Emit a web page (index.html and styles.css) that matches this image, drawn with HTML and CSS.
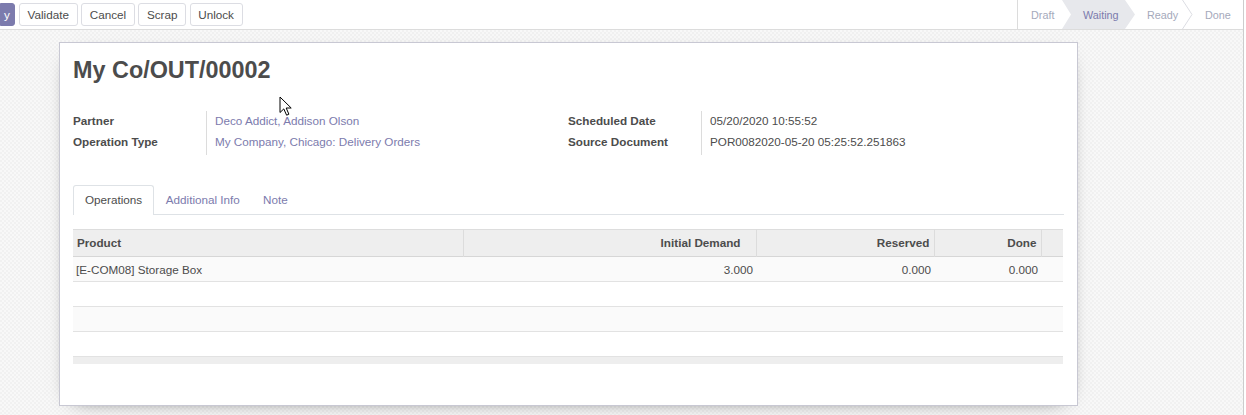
FILE: index.html
```html
<!DOCTYPE html>
<html lang="en">
<head>
<meta charset="utf-8">
<title>My Co/OUT/00002</title>
<link rel="stylesheet" href="styles.css">
</head>
<body>
<div class="app">
  <div class="control">
    <div class="buttons">
      <button class="btn btn-primary">y</button>
      <button class="btn">Validate</button>
      <button class="btn">Cancel</button>
      <button class="btn">Scrap</button>
      <button class="btn">Unlock</button>
    </div>
    <div class="statusbar">
      <span class="st st-draft">Draft</span>
      <span class="st st-waiting">Waiting</span>
      <span class="st st-ready">Ready<svg class="chev" width="11" height="29" viewBox="0 0 11 29"><polyline points="0.5,0 10,14.5 0.5,29" fill="none" stroke="#dcdde3" stroke-width="1"/></svg></span>
      <span class="st st-done">Done</span>
    </div>
  </div>
  <div class="content">
    <div class="sheet">
      <h1 class="title">My Co/OUT/00002</h1>
      <div class="groups">
        <div class="group group-left">
          <div class="lbl">Partner</div>
          <div class="val"><a class="link">Deco Addict, Addison Olson</a></div>
          <div class="lbl">Operation Type</div>
          <div class="val"><a class="link">My Company, Chicago: Delivery Orders</a></div>
        </div>
        <div class="group group-right">
          <div class="lbl">Scheduled Date</div>
          <div class="val">05/20/2020 10:55:52</div>
          <div class="lbl">Source Document</div>
          <div class="val">POR0082020-05-20 05:25:52.251863</div>
        </div>
      </div>
      <div class="tabs">
        <span class="tab active">Operations</span>
        <span class="tab">Additional Info</span>
        <span class="tab">Note</span>
      </div>
      <table class="lines">
        <colgroup>
          <col class="c1"><col class="c2"><col class="c3"><col class="c4"><col class="c5">
        </colgroup>
        <thead>
          <tr>
            <th class="left">Product</th>
            <th class="num demand">Initial Demand</th>
            <th class="num">Reserved</th>
            <th class="num">Done</th>
            <th></th>
          </tr>
        </thead>
        <tbody>
          <tr class="odd">
            <td class="left">[E-COM08] Storage Box</td>
            <td class="num">3.000</td>
            <td class="num">0.000</td>
            <td class="num">0.000</td>
            <td></td>
          </tr>
          <tr><td></td><td></td><td></td><td></td><td></td></tr>
          <tr class="odd"><td></td><td></td><td></td><td></td><td></td></tr>
          <tr><td></td><td></td><td></td><td></td><td></td></tr>
        </tbody>
        <tfoot>
          <tr><td colspan="5"></td></tr>
        </tfoot>
      </table>
    </div>
  </div>
  <svg class="cursor" width="14" height="21" viewBox="0 0 14 21"><path d="M1 1 L1 16.5 L4.8 12.9 L7.6 19.2 L9.9 18.2 L7.2 12 L12.2 12 Z" fill="#ffffff" stroke="#000000" stroke-width="1" stroke-linejoin="miter"/></svg>
</div>
</body>
</html>
```
FILE: styles.css
```css
* { box-sizing: border-box; }
html, body {
  margin: 0;
  padding: 0;
  background: #ffffff;
}
body {
  font-family: "Liberation Sans", Arial, sans-serif;
  font-size: 11.7px;
  color: #4c4c4c;
}
.app {
  position: relative;
  width: 1244px;
  height: 415px;
  border-right: 1px solid #cdcdcd;
  overflow: hidden;
  display: flex;
  flex-direction: column;
}
.control {
  height: 30px;
  flex: none;
  display: flex;
  background: #ffffff;
  border-bottom: 1px solid #dcdcdc;
}
.buttons {
  display: flex;
  align-items: flex-start;
  gap: 3.6px;
  padding-top: 3px;
}
.btn {
  height: 23px;
  padding: 0 7.6px;
  border: 1px solid #dcdde3;
  border-radius: 3px;
  background: #ffffff;
  font-family: inherit;
  font-size: 11.7px;
  color: #4c4c4c;
  line-height: 21px;
}
.btn-primary {
  width: 15px;
  padding: 0 0 0 3px;
  text-align: left;
  background: #7c7bad;
  border-color: #7c7bad;
  color: #ffffff;
  border-radius: 0 3px 3px 0;
  margin-right: 0.4px;
}
.statusbar {
  margin-left: auto;
  height: 29px;
  width: 226px;
  border-left: 1px solid #dcdcdc;
  display: flex;
  font-size: 10.8px;
  color: #a5a9bb;
}
.st {
  position: relative;
  height: 29px;
  display: flex;
  align-items: center;
  flex: none;
}
.st-draft { width: 44px; padding-left: 13px; }
.st-waiting {
  width: 73px;
  padding-left: 21px;
  background: #e7e8ec;
  color: #7c7bad;
  clip-path: polygon(0 0, 63px 0, 73px 50%, 63px 100%, 0 100%, 9px 50%);
}
.st-ready { width: 58px; padding-left: 12px; }
.st-done { width: 50px; padding-left: 12px; }
.chev {
  position: absolute;
  right: 0;
  top: 0;
}
.content {
  flex: 1;
  background-color: #f4f4f4;
  background-image: repeating-conic-gradient(#f1f1f1 0 25%, #f8f8f8 0 50%);
  background-size: 4px 4px;
  padding-top: 12px;
  padding-left: 59px;
}
.sheet {
  width: 1019px;
  height: 364px;
  background: #ffffff;
  border: 1px solid #c8c8d3;
  box-shadow: 0 5px 20px -15px #000000;
  padding: 13px 13px 0 13px;
}
.title {
  margin: 0;
  font-size: 23.4px;
  line-height: 28px;
  font-weight: bold;
  color: #4c4c4c;
}
.groups {
  display: flex;
  margin-top: 27px;
}
.group {
  display: grid;
  grid-template-columns: 133px 1fr;
  grid-auto-rows: 21px;
  padding-bottom: 2px;
}
.group-left { width: 495px; }
.group-right { flex: 1; }
.lbl {
  font-weight: bold;
  display: flex;
  align-items: center;
  padding-bottom: 2px;
}
.val {
  border-left: 1px solid #dcdcdc;
  padding-left: 8px;
  display: flex;
  align-items: center;
  padding-bottom: 2px;
}
.group .val:last-child {
  margin-bottom: -2px;
  padding-bottom: 4px;
}
.link {
  color: #7c7bad;
  text-decoration: none;
}
.tabs {
  margin-top: 30px;
  display: flex;
  height: 30px;
  border-bottom: 1px solid #dee2e6;
}
.tab {
  height: 30px;
  padding: 0 10.6px 3px 10.6px;
  display: flex;
  align-items: center;
  color: #7c7bad;
  border: 1px solid transparent;
  border-bottom: none;
}
.tab.active {
  color: #4c4c4c;
  background: #ffffff;
  border-color: #dee2e6;
  border-radius: 3px 3px 0 0;
  padding-left: 11px;
  padding-right: 11px;
}
.lines {
  margin-top: 14px;
  width: 990px;
  border-collapse: collapse;
  table-layout: fixed;
}
.c1 { width: 390px; }
.c2 { width: 293px; }
.c3 { width: 178px; }
.c4 { width: 107px; }
.c5 { width: 22px; }
.lines thead tr {
  background: #eeeeee;
  border-top: 1px solid #dddddd;
  border-bottom: 1px solid #d6d6d6;
}
.lines th {
  height: 27px;
  padding: 0 4px 1px 4px;
  font-weight: bold;
  text-align: left;
}
.lines th + th {
  border-left: 1px solid #dcdcdc;
}
.lines th.num, .lines td.num { text-align: right; }
.lines th.demand { padding-right: 15px; }
.lines td {
  height: 25px;
  padding: 0 3px;
}
.lines tbody tr {
  border-bottom: 1px solid #e2e2e2;
}
.lines tbody tr.odd { background: #fafafa; }
.lines tfoot td {
  height: 7px;
  padding: 0;
  background: #eeeeee;
}
.cursor {
  position: absolute;
  left: 279px;
  top: 96px;
}
```
